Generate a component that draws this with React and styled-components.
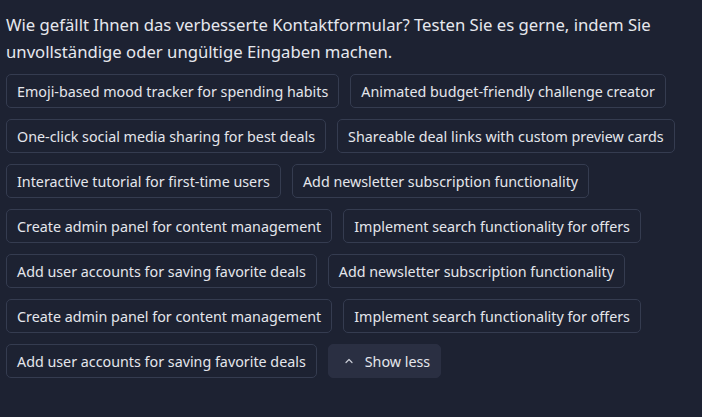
import React from "react";
import styled, { createGlobalStyle } from "styled-components";

const GlobalStyle = createGlobalStyle`
  html, body {
    margin: 0;
    padding: 0;
    background: #1d2232;
  }
  body {
    font-family: "Noto Sans", "Liberation Sans", sans-serif;
    color: #e4e6ec;
  }
`;

const Wrapper = styled.div`
  padding: 11px 6px;
  box-sizing: border-box;
  width: 702px;
  height: 417px;
  background: #1d2232;
`;

const Question = styled.p`
  margin: 0 0 9px 0;
  font-size: 16.7px;
  line-height: 27px;
  color: #e6e8ee;
`;

const ChipList = styled.div`
  display: flex;
  flex-wrap: wrap;
  gap: 11px 11px;
  max-width: 690px;
`;

const Chip = styled.button`
  display: flex;
  align-items: center;
  gap: 11px;
  height: 34px;
  box-sizing: border-box;
  padding: 0 ${(p) => (p.$muted ? "10px 0 15px" : "10px")};
  border: 1px solid ${(p) => (p.$muted ? "#2a2f42" : "#353c50")};
  border-radius: 5px;
  background: ${(p) => (p.$muted ? "#2a2f42" : "#1d2232")};
  color: #e4e6ec;
  font-family: inherit;
  font-size: 14.3px;
  white-space: nowrap;
  cursor: pointer;
`;

const suggestions = [
  "Emoji-based mood tracker for spending habits",
  "Animated budget-friendly challenge creator",
  "One-click social media sharing for best deals",
  "Shareable deal links with custom preview cards",
  "Interactive tutorial for first-time users",
  "Add newsletter subscription functionality",
  "Create admin panel for content management",
  "Implement search functionality for offers",
  "Add user accounts for saving favorite deals",
  "Add newsletter subscription functionality",
  "Create admin panel for content management",
  "Implement search functionality for offers",
  "Add user accounts for saving favorite deals",
];

const ChevronUp = () => (
  <svg width="10" height="10" viewBox="0 0 10 10" fill="none">
    <path d="M2 6.5 L5 3.5 L8 6.5" stroke="#c9ccd6" strokeWidth="1.2" strokeLinecap="round" strokeLinejoin="round" />
  </svg>
);

export default function App() {
  return (
    <>
      <GlobalStyle />
      <Wrapper>
        <Question>
          Wie gefällt Ihnen das verbesserte Kontaktformular? Testen Sie es gerne, indem Sie
          unvollständige oder ungültige Eingaben machen.
        </Question>
        <ChipList>
          {suggestions.map((s, i) => (
            <Chip key={i}>{s}</Chip>
          ))}
          <Chip $muted>
            <ChevronUp />
            Show less
          </Chip>
        </ChipList>
      </Wrapper>
    </>
  );
}
